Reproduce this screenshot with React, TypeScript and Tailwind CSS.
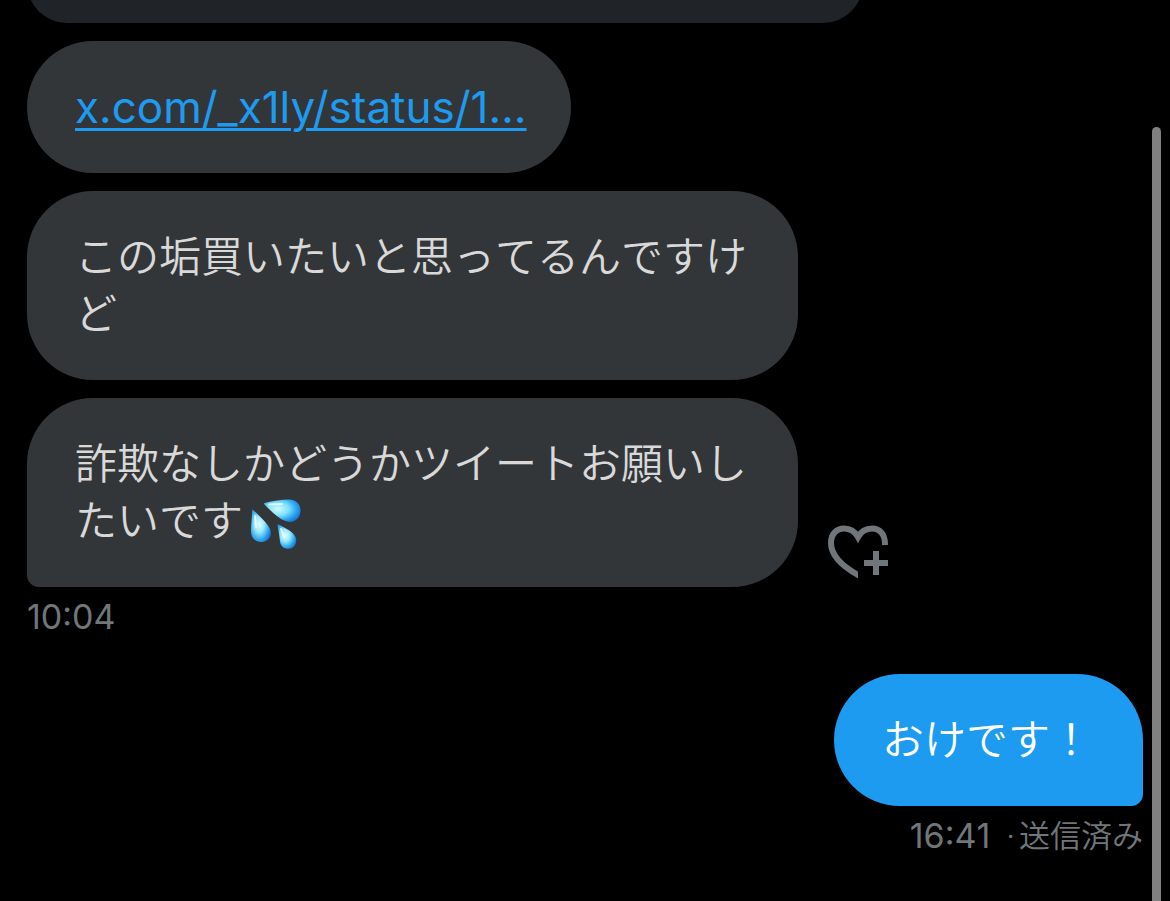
import React from "react";

function Drops() {
  return (
    <svg viewBox="0 0 54 54" className="-my-2 ml-1.5 inline-block size-[54px] align-[-8px]" role="img" aria-label="💦">
      <defs>
        <radialGradient id="dropA" cx="0.38" cy="0.42" r="0.66">
          <stop offset="0" stopColor="#d4fbff" />
          <stop offset="0.45" stopColor="#7fe0fb" />
          <stop offset="0.75" stopColor="#2fa9f2" />
          <stop offset="1" stopColor="#1479d6" />
        </radialGradient>
        <radialGradient id="dropB" cx="0.42" cy="0.45" r="0.62">
          <stop offset="0" stopColor="#e0fcff" />
          <stop offset="0.4" stopColor="#9be8fb" />
          <stop offset="0.75" stopColor="#35adf1" />
          <stop offset="1" stopColor="#1479d6" />
        </radialGradient>
      </defs>
      <path fill="url(#dropA)" d="M15.500 5C24 3 33 1.500 40 1.500C47 1.500 51.500 6 51.500 12.500C51.500 19 47 24 41 24C32 23.500 23 14 15.500 6.500C15 6 15 5.200 15.500 5Z" />
      <path fill="url(#dropB)" d="M4 11.800C8 16 15 22 19 27.500C21.500 31 22.500 34 21.500 37.500C20 42 16.500 44.200 12 44C5.500 43.800 2 39.500 2 33.500C2 28 3 19 3.200 12.200C3.300 11.500 3.600 11.400 4 11.800Z" />
      <path fill="url(#dropB)" d="M29.500 26.500C35 29.500 41 32 44.500 36C47.500 39.500 48 43 46.500 46C45 49.500 42 51 38.500 50.800C34 50.500 31.500 47.500 31 43.500C30.500 38.500 29.500 32 28.500 27.500C28.400 26.500 28.800 26.200 29.500 26.500Z" />
      <path fill="none" stroke="#edfeff" strokeWidth="2" strokeLinecap="round" opacity="0.8" d="M20 6.500 33 6M6 18 7 29M32 31 35 39" />
    </svg>
  );
}

function HeartPlus() {
  return (
    <svg viewBox="0 0 60 54" className="h-[54px] w-[60px]" aria-hidden="true">
      <defs>
        <clipPath id="heartClip">
          <path d="M0 0H60V20H30V54H0Z" />
        </clipPath>
      </defs>
      <path
        clipPath="url(#heartClip)"
        fill="none"
        stroke="#71767b"
        strokeWidth="6"
        d="M57 22V19C57 9 51.500 3.500 44 3.500C38 3.500 33 6.500 30 12C27 6.500 22 3.500 16 3.500C8.500 3.500 3 9 3 18C3 30 14 41 30 50L36 53"
      />
      <path fill="#71767b" d="M45 26H51V35H60V41H51V50H45V41H36V35H45Z" />
    </svg>
  );
}

export default function App() {
  return (
    <main
      lang="ja"
      className="relative flex min-h-screen flex-col items-start overflow-hidden bg-black px-[27px] font-['Inter','Noto_Sans_CJK_JP',sans-serif] text-[42px] leading-[57px] font-[350] text-[#d9d9d9] [font-kerning:none]"
    >
      <div className="-mt-[41px] h-16 w-full max-w-[836px] rounded-b-[40px] bg-[#202327]" />
      <div className="mt-[18px] rounded-[66px] bg-[#333639] py-[37px] pr-11 pl-12 text-[44px] leading-[58px] font-normal [font-kerning:auto]">
        <a href="https://x.com/" className="block text-[#1d9bf0] underline decoration-[3px] underline-offset-[5px]">
          x.com/_x1ly/status/1…
        </a>
      </div>
      <p className="mt-[18px] max-w-[771px] rounded-[66px] bg-[#333639] px-12 pt-[37px] pb-[38px]">
        この垢買いたいと思ってるんですけど
      </p>
      <div className="mt-[18px] flex items-end gap-[30px]">
        <p className="max-w-[771px] rounded-[66px] rounded-bl-xl bg-[#333639] px-12 pt-[37px] pb-[38px]">
          詐欺なしかどうかツイートお願いしたいです
          <Drops />
        </p>
        <button type="button" aria-label="リアクション" className="mb-2 shrink-0">
          <HeartPlus />
        </button>
      </div>
      <time className="mt-2 text-[34px] leading-[44px] font-normal text-[#71767b]">10:04</time>
      <p className="mt-[35px] self-end rounded-[66px] rounded-br-xl bg-[#1d9bf0] pt-[37px] pr-[51px] pb-[38px] pl-12 text-white">
        おけです！
      </p>
      <div className="mt-2 flex items-center self-end text-[34px] leading-[44px] text-[#71767b]">
        <time className="mr-4 font-normal">16:41</time>
        <span className="mr-1 text-[31px]">·</span>
        <span className="text-[31px]">送信済み</span>
      </div>
      <div className="absolute top-[127px] right-[9px] bottom-0 w-[9px] rounded-t-full bg-[#808080]" />
    </main>
  );
}
